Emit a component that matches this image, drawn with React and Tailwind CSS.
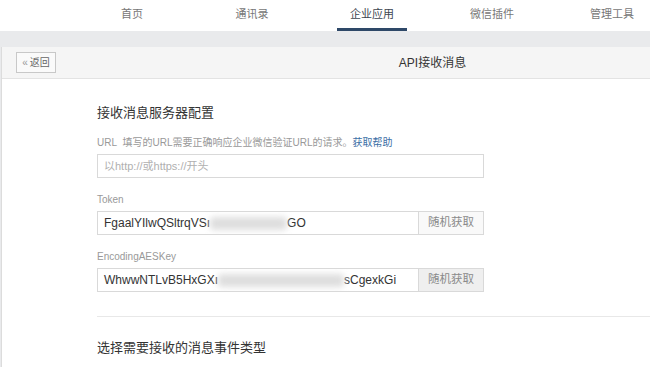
import React from "react";

const font = { fontFamily: '"Liberation Sans", "Noto Sans CJK SC", sans-serif' };

const navItems = ["首页", "通讯录", "企业应用", "微信插件", "管理工具"];

function KeyField({ head, tail, blurW, btnBg }) {
  return (
    <div className="flex w-[387px] h-[24px] border border-[#d9d9d9]">
      <div className="flex-1 flex items-center pl-[6px] text-[12px] text-[#333] bg-white overflow-hidden whitespace-nowrap">
        <span>{head}</span>
        {/* masked part of the key */}
        <div className={`${blurW} h-[13px] bg-[#dedede] blur-[3px] rounded`} />
        <span>{tail}</span>
      </div>
      <button className={`w-[65px] border-l border-[#d9d9d9] ${btnBg} text-[11.5px] text-[#8a8a8a]`}>
        随机获取
      </button>
    </div>
  );
}

export default function App() {
  return (
    <div className="w-[650px] h-[367px] overflow-hidden bg-[#e9eaec] flex flex-col" style={font}>
      {/* top nav */}
      <div className="h-[31px] shrink-0 bg-white flex pl-[72px]">
        {navItems.map((item, i) => (
          <div key={item} className="w-[120px] shrink-0 flex flex-col items-center">
            <div className={`h-[28px] flex items-center text-[11px] ${i === 2 ? "text-[#3d4650]" : "text-[#777]"}`}>
              {item}
            </div>
            {i === 2 && <div className="w-[70px] h-[3px] bg-[#2e4868]" />}
          </div>
        ))}
      </div>

      <div className="h-[16px] shrink-0" />

      {/* panel */}
      <div className="flex-1 ml-[1px] w-[862px] border-l border-[#dcdcdc] bg-white">
        <div className="h-[32px] bg-[#f5f5f5] border-b border-[#e3e3e3] flex items-center relative">
          <button className="ml-[14px] w-[40px] h-[21px] border border-[#c8c8c8] bg-[#fafafa] text-[10px] text-[#666] flex items-center justify-center gap-[2px]">
            <span className="text-[#999]">«</span>返回
          </button>
          <div className="absolute left-0 right-0 text-center text-[12px] text-[#333] pointer-events-none">API接收消息</div>
        </div>

        <div className="pl-[95px] pt-[25px] flex flex-col">
          <div className="text-[13px] leading-[18px] text-[#333]">接收消息服务器配置</div>

          <div className="mt-[14px] text-[10px] leading-[14px] text-[#999]">
            URL&nbsp;&nbsp;填写的URL需要正确响应企业微信验证URL的请求。<span className="text-[#3b6ea5]">获取帮助</span>
          </div>
          <div className="mt-[4px] w-[387px] h-[24px] border border-[#d9d9d9] flex items-center pl-[6px] text-[11px] text-[#b0b0b0]">
            以http://或https://开头
          </div>

          <div className="mt-[15px] text-[10px] leading-[14px] text-[#999]">Token</div>
          <div className="mt-[4px]">
            <KeyField head="FgaalYIlwQSltrqVSı" blurW="w-[77px]" tail="GO" btnBg="bg-[#f9f9f9]" />
          </div>

          <div className="mt-[15px] text-[10px] leading-[14px] text-[#999]">EncodingAESKey</div>
          <div className="mt-[4px]">
            <KeyField head="WhwwNTLvB5HxGXı" blurW="w-[126px]" tail="sCgexkGi" btnBg="bg-[#efefef]" />
          </div>

          <div className="mt-[24px] h-px bg-[#e8e8e8]" />

          <div className="mt-[22px] text-[13px] leading-[18px] text-[#333]">选择需要接收的消息事件类型</div>
        </div>
      </div>
    </div>
  );
}
